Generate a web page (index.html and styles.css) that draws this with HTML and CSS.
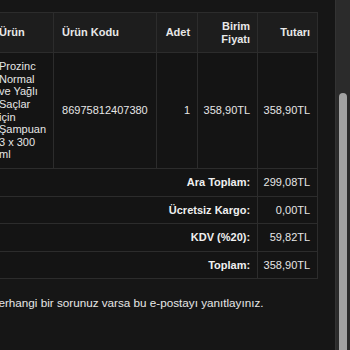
FILE: index.html
```html
<!DOCTYPE html>
<html lang="tr">
<head>
<meta charset="utf-8">
<link rel="stylesheet" href="styles.css">
</head>
<body>
<div class="frame">
  <div class="viewport">
    <div class="content">
      <table class="order">
        <thead>
          <tr>
            <th class="c-name">Ürün</th>
            <th class="c-code">Ürün Kodu</th>
            <th class="num c-qty">Adet</th>
            <th class="num c-price">Birim<br>Fiyatı</th>
            <th class="num c-total">Tutarı</th>
          </tr>
        </thead>
        <tbody>
          <tr class="item">
            <td class="c-name">Prozinc Normal ve Yağlı Saçlar için Şampuan 3 x 300 ml</td>
            <td class="c-code">86975812407380</td>
            <td class="num">1</td>
            <td class="num tight">358,90TL</td>
            <td class="num tight">358,90TL</td>
          </tr>
          <tr class="sum">
            <th colspan="4" class="num">Ara Toplam:</th>
            <td class="num tight">299,08TL</td>
          </tr>
          <tr class="sum">
            <th colspan="4" class="num">Ücretsiz Kargo:</th>
            <td class="num tight">0,00TL</td>
          </tr>
          <tr class="sum">
            <th colspan="4" class="num">KDV (%20):</th>
            <td class="num tight">59,82TL</td>
          </tr>
          <tr class="sum">
            <th colspan="4" class="num">Toplam:</th>
            <td class="num tight">358,90TL</td>
          </tr>
        </tbody>
      </table>
      <p class="note">Herhangi bir sorunuz varsa bu e-postayı yanıtlayınız.</p>
    </div>
  </div>
  <div class="scrollbar"><div class="thumb"></div></div>
</div>
</body>
</html>
```
FILE: styles.css
```css
html, body {
  margin: 0;
  padding: 0;
  height: 100%;
  background: #161616;
}
body {
  font-family: "Liberation Sans", Arial, sans-serif;
  color: #e6e6e6;
}
.frame {
  display: flex;
  height: 350px;
  overflow: hidden;
}
.viewport {
  flex: 1;
  overflow: hidden;
  background: #161616;
}
.content {
  margin-left: -10px;
  padding-top: 12px;
}
.order {
  border-collapse: collapse;
  font-size: 11px;
  background: #141414;
  border: 1px solid #2c2c2c;
}
.order th, .order td {
  border: 1px solid #2c2c2c;
  padding: 7px 7px 7px 8px;
  vertical-align: middle;
  text-align: left;
  line-height: 12.6px;
}
.order thead th {
  background: #1d1d1d;
  font-weight: bold;
  color: #e8e8e8;
}
.order .num {
  text-align: right;
}
.order .tight,
.order .c-price,
.order .c-total {
  padding-left: 4px;
}
.c-name { width: 47px; }
.c-code { width: 87px; }
.c-qty { width: 25px; }
.c-price { width: 48px; }
.c-total { width: 48px; }
.sum th {
  font-weight: bold;
  color: #f0f0f0;
}
.note {
  margin: 17px 0 0 0;
  font-size: 11.7px;
  color: #e6e6e6;
}
.scrollbar {
  width: 15px;
  flex: none;
  background: #2b2b2b;
  border-left: 1px solid #333;
  display: flex;
  flex-direction: column;
  padding-top: 93px;
  box-sizing: border-box;
  align-items: center;
}
.thumb {
  width: 8px;
  flex: 1;
  background: #a3a3a3;
  border-radius: 4px 4px 0 0;
  margin-left: -1px;
}
```
